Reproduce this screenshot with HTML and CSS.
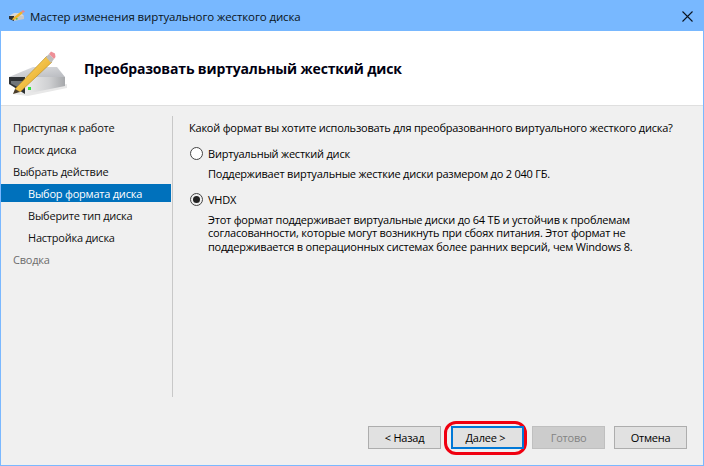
FILE: index.html
```html
<!DOCTYPE html>
<html lang="ru">
<head>
<meta charset="utf-8">
<title>Мастер изменения виртуального жесткого диска</title>
<link rel="stylesheet" href="styles.css">
</head>
<body>
<div class="window">
  <div class="titlebar">
    <svg class="title-icon" width="16" height="12" viewBox="0 0 16 12">
      <path d="M0 6 L5 3 H12 L15 6 Z" fill="#d6d6d6"/>
      <path d="M0 6 H5 V11 L0 9 Z" fill="#2f3235"/>
      <path d="M5 6 H15 V9 L5 11 Z" fill="#c8c8c8"/>
      <rect x="7" y="8" width="1.500" height="1.500" fill="#30c040"/>
      <path d="M3 10 L4 8 L12 1.500 L14 3 L6 9.500 Z" fill="#f0b428"/>
      <path d="M12 1.500 L14 0 L16 1.500 L14 3 Z" fill="#e88890"/>
    </svg>
    <span class="title-text">Мастер изменения виртуального жесткого диска</span>
    <svg class="close" width="11" height="11" viewBox="0 0 11 11"><path d="M.5 .5 L10.500 10.500 M10.500 .5 L.5 10.500" stroke="#0b1420" stroke-width="1.100" fill="none"/></svg>
  </div>
  <header class="header">
    <svg class="header-icon" width="60" height="56" viewBox="0 0 60 56">
      <defs>
        <linearGradient id="top" x1="0" y1="0" x2="1" y2="1"><stop offset="0" stop-color="#e2e3e5"/><stop offset="1" stop-color="#b9bbc0"/></linearGradient>
        <linearGradient id="front" x1="0" y1="0" x2="1" y2="0"><stop offset="0" stop-color="#eeeeee"/><stop offset=".6" stop-color="#cfd0d2"/><stop offset="1" stop-color="#a6a8ab"/></linearGradient>
        <linearGradient id="pen" x1="0" y1="0" x2="1" y2="1"><stop offset="0" stop-color="#ffe278"/><stop offset="1" stop-color="#e39c12"/></linearGradient>
      </defs>
      <path d="M4 54 L20 56 L59 48 V44 Z" fill="#e8e8e8"/>
      <path d="M1 37 L25 27 H49 L57 37 Z" fill="url(#top)"/>
      <path d="M17 37 H57 V46 L17 54 Z" fill="url(#front)"/>
      <path d="M1 37 H17 V54 L1 44 Z" fill="#2e3134"/>
      <path d="M3 41 H15 V50 L3 43.500 Z" fill="#70757a"/>
      <rect x="20" y="47" width="3" height="3" fill="#30e040"/>
      <path d="M7 49 L39 16 L44 22 L12 52 Z" fill="url(#pen)" stroke="#b48818" stroke-width=".6"/>
      <path d="M5 54 L7 49 L12 52 Z" fill="#4a3d2a"/>
      <path d="M38 17 L41 14 L46 19 L43 23 Z" fill="#bdbdbd"/>
      <path d="M41 14 L43 11.500 L47 13.500 L47.500 17 L46 19 Z" fill="#ee8f97"/>
    </svg>
    <h1 class="header-title">Преобразовать виртуальный жесткий диск</h1>
  </header>
  <main class="content">
    <nav class="nav">
      <div class="nav-item">Приступая к работе</div>
      <div class="nav-item">Поиск диска</div>
      <div class="nav-item">Выбрать действие</div>
      <div class="nav-item sub active"><span class="band">Выбор формата диска</span></div>
      <div class="nav-item sub">Выберите тип диска</div>
      <div class="nav-item sub">Настройка диска</div>
      <div class="nav-item muted">Сводка</div>
    </nav>
    <section class="pane">
      <p class="question">Какой формат вы хотите использовать для преобразованного виртуального жесткого диска?</p>
      <div class="option">
        <span class="radio"></span><span>Виртуальный жесткий диск</span>
      </div>
      <p class="desc first">Поддерживает виртуальные жесткие диски размером до 2 040 ГБ.</p>
      <div class="option second">
        <span class="radio checked"></span><span>VHDX</span>
      </div>
      <p class="desc">Этот формат поддерживает виртуальные диски до 64 ТБ и устойчив к проблемам<br>согласованности, которые могут возникнуть при сбоях питания. Этот формат не<br>поддерживается в операционных системах более ранних версий, чем Windows 8.</p>
    </section>
  </main>
  <footer class="footer">
    <button class="btn">&lt; Назад</button>
    <span class="ring"><button class="btn primary">Далее &gt;</button></span>
    <button class="btn disabled">Готово</button>
    <button class="btn cancel">Отмена</button>
  </footer>
</div>
</body>
</html>
```
FILE: styles.css
```css
* { box-sizing: border-box; }
html, body { margin: 0; padding: 0; }
body { width: 704px; height: 466px; overflow: hidden; font-family: "Open Sans", "Noto Sans", sans-serif; font-size: 11px; letter-spacing: -0.220px; color: #000; }
.window { width: 704px; height: 466px; display: flex; flex-direction: column; background: #f0f0f0; border: 1px solid #7ab8ff; border-top: 0; }
.titlebar { height: 31px; flex: none; background: #78b8ff; display: flex; align-items: center; padding: 1px 11px 0 9px; margin: 0 -1px; }
.title-icon { flex: none; margin-right: 5px; }
.title-text { font-size: 11.500px; letter-spacing: -0.120px; color: #0b1420; flex: 1; }
.header { height: 75px; flex: none; background: #fff; border-bottom: 1px solid #dfdfdf; display: flex; align-items: center; padding-left: 7px; }
.header-icon { flex: none; margin-right: 16px; }
.header-title { margin: 0; font-size: 14px; letter-spacing: -0.150px; font-weight: 700; color: #001; }
.content { flex: 1; display: flex; padding-top: 10px; min-height: 0; }
.nav { width: 172px; height: 281px; flex: none; border-right: 1px solid #c8c8c8; }
.nav-item { height: 22px; display: flex; align-items: center; padding: 1px 0 0 12px; white-space: nowrap; color: #111; }
.nav-item.sub { padding-left: 27px; }
.nav-item.active { padding: 0; margin-right: 1px; }
.band { flex: 1; height: 18px; line-height: 18px; padding: 1px 0 0 27px; background: #0071bc; color: #fff; }
.nav-item.muted { color: #6d6d6d; }
.pane { flex: 1; padding: 1px 0 0 16px; }
.question { margin: 0; height: 22px; line-height: 22px; white-space: nowrap; }
.option { display: flex; align-items: center; height: 20px; margin-top: 4px; gap: 5px; padding-left: 1px; }
.option.second { margin-top: 9px; }
.radio { width: 13px; height: 13px; border: 1px solid #444; border-radius: 50%; background: #fff; flex: none; display: flex; align-items: center; justify-content: center; }
.radio.checked { background: #f0f0f0; }
.radio.checked::after { content: ""; width: 7px; height: 7px; border-radius: 50%; background: #222; }
.desc { margin: 3px 0 0 19px; line-height: 13.500px; white-space: nowrap; }
.desc.first { margin-top: 4px; }
.footer { height: 67px; flex: none; display: flex; align-items: flex-start; padding: 0 0 0 367px; }
.btn { width: 73px; height: 23px; flex: none; margin-top: 28px; padding: 0; background: #e1e1e1; border: 1px solid #adadad; font: inherit; letter-spacing: inherit; color: #000; }
.ring { width: 83px; height: 34px; flex: none; margin: 23px 0 0 3px; border: 3px solid #f00010; border-radius: 12px; padding: 2px 0 0 4px; display: flex; }
.ring .btn { margin: 0; }
.btn.primary { border: 2px solid #0078d7; padding-right: 4px; }
.btn.disabled { margin-left: 5px; background: #cccccc; border-color: #bfbfbf; color: #838383; }
.btn.cancel { margin-left: 9px; }
```
